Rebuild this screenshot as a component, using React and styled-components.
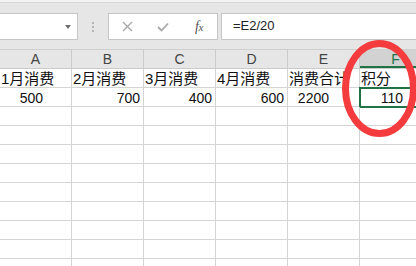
import React from "react";
import styled, { createGlobalStyle } from "styled-components";

const Global = createGlobalStyle`
  html, body {
    margin: 0;
    padding: 0;
    background: #ffffff;
  }
  * {
    box-sizing: border-box;
  }
`;

const Frame = styled.div`
  position: relative;
  width: 416px;
  height: 266px;
  overflow: hidden;
  background: #ffffff;
  font-family: "Liberation Sans", "Noto Sans CJK SC", sans-serif;
`;

const TopStrip = styled.div`
  height: 3px;
  background: #f3f3f3;
  border-bottom: 1px solid #d6d6d6;
`;

const Toolbar = styled.div`
  display: flex;
  align-items: flex-start;
  height: 46px;
  padding-top: 10px;
  background: #e6e6e6;
`;

const NameBox = styled.div`
  display: flex;
  align-items: center;
  justify-content: flex-end;
  width: 79px;
  height: 27px;
  margin-left: -1px;
  padding-right: 6px;
  background: #ffffff;
  border: 1px solid #c6c6c6;
`;

const DropArrow = styled.span`
  width: 0;
  height: 0;
  border-left: 3.5px solid transparent;
  border-right: 3.5px solid transparent;
  border-top: 4px solid #6f6f6f;
`;

const Grip = styled.div`
  display: flex;
  flex-direction: column;
  align-items: center;
  justify-content: center;
  gap: 2px;
  width: 30px;
  height: 27px;

  span {
    width: 2px;
    height: 2px;
    background: #b3b3b3;
  }
`;

const FuncBox = styled.div`
  display: flex;
  align-items: center;
  gap: 14px;
  width: 110px;
  height: 27px;
  padding-left: 7px;
  background: #ffffff;
  border: 1px solid #c6c6c6;
`;

const IconSlot = styled.div`
  display: flex;
  align-items: center;
  justify-content: center;
  width: 22px;
  height: 22px;
  color: ${({ $tone }) => $tone || "#a8a8a8"};
`;

const Fx = styled.span`
  font-family: "Liberation Serif", "DejaVu Serif", serif;
  font-style: italic;
  font-size: 14px;
  color: #555555;
  letter-spacing: -0.5px;

  small {
    font-size: 11px;
  }
`;

const FormulaInput = styled.div`
  flex: 1;
  height: 27px;
  margin-left: 3px;
  margin-right: -2px;
  padding-left: 11px;
  background: #ffffff;
  border: 1px solid #c6c6c6;
  font-size: 13px;
  line-height: 24px;
  color: #222222;
`;

const Sheet = styled.div`
  display: grid;
  grid-template-columns: repeat(6, 72px);
  width: 432px;
`;

const ColHead = styled.div`
  height: 20px;
  border-top: 1px solid #cfcfcf;
  border-bottom: 1px solid #cbcbcb;
  border-right: 1px solid #cbcbcb;
  background: ${({ $selected }) => ($selected ? "#d2d2d2" : "#e6e6e6")};
  box-shadow: ${({ $selected }) =>
    $selected ? "inset 0 -2px 0 #217346" : "none"};
  color: ${({ $selected }) => ($selected ? "#217346" : "#444444")};
  font-size: 14px;
  line-height: 18px;
  text-align: center;
`;

const Cell = styled.div`
  position: relative;
  height: 19px;
  border-right: 1px solid #d4d4d4;
  border-bottom: 1px solid #d4d4d4;
  padding: 1px ${({ $pr }) => $pr ?? 3}px 0 ${({ $pl }) => $pl ?? 1}px;
  font-size: ${({ $size }) => $size || 14}px;
  line-height: 18px;
  color: #111111;
  text-align: ${({ $align }) => $align || "left"};
  white-space: nowrap;
  overflow: ${({ $active }) => ($active ? "visible" : "hidden")};
`;

const Selection = styled.div`
  position: absolute;
  top: -1px;
  left: -1px;
  right: -1px;
  bottom: -2px;
  border: 2px solid #217346;
  pointer-events: none;
`;

const Annotation = styled.svg`
  position: absolute;
  left: 0;
  top: 0;
  pointer-events: none;
`;

const columns = ["A", "B", "C", "D", "E", "F"];

const titles = ["1月消费", "2月消费", "3月消费", "4月消费", "消费合计", "积分"];

const values = [
  { text: "500", pr: 28 },
  { text: "700", pr: 3 },
  { text: "400", pr: 3 },
  { text: "600", pr: 3 },
  { text: "2200", pr: 30 },
  { text: "110", pr: 28, active: true },
];

const emptyRows = 11;

const App = () => {
  return (
    <Frame>
      <Global />
      <TopStrip />
      <Toolbar>
        <NameBox>
          <DropArrow />
        </NameBox>
        <Grip>
          <span />
          <span />
          <span />
        </Grip>
        <FuncBox>
          <IconSlot>
            <svg width="11" height="11" viewBox="0 0 11 11">
              <path
                d="M1 1 L10 10 M10 1 L1 10"
                stroke="currentColor"
                strokeWidth="1.4"
                fill="none"
              />
            </svg>
          </IconSlot>
          <IconSlot>
            <svg width="12" height="10" viewBox="0 0 12 10">
              <path
                d="M1 5 L4.5 8.5 L11 1.5"
                stroke="currentColor"
                strokeWidth="1.8"
                fill="none"
              />
            </svg>
          </IconSlot>
          <IconSlot>
            <Fx>
              f<small>x</small>
            </Fx>
          </IconSlot>
        </FuncBox>
        <FormulaInput>=E2/20</FormulaInput>
      </Toolbar>
      <Sheet>
        {columns.map((c) => (
          <ColHead key={c} $selected={c === "F"}>
            {c}
          </ColHead>
        ))}
        {titles.map((t) => (
          <Cell key={t} $size={15}>
            {t}
          </Cell>
        ))}
        {values.map((v) => (
          <Cell key={v.text} $align="right" $pr={v.pr} $active={v.active}>
            {v.text}
            {v.active && <Selection />}
          </Cell>
        ))}
        {Array.from({ length: emptyRows * 6 }).map((_, i) => (
          <Cell key={"e" + i} />
        ))}
      </Sheet>
      <Annotation width="416" height="266" viewBox="0 0 416 266">
        <ellipse
          cx="379.5"
          cy="88.5"
          rx="34"
          ry="45"
          fill="none"
          stroke="#f43b3d"
          strokeWidth="7"
        />
      </Annotation>
    </Frame>
  );
};

export default App;
